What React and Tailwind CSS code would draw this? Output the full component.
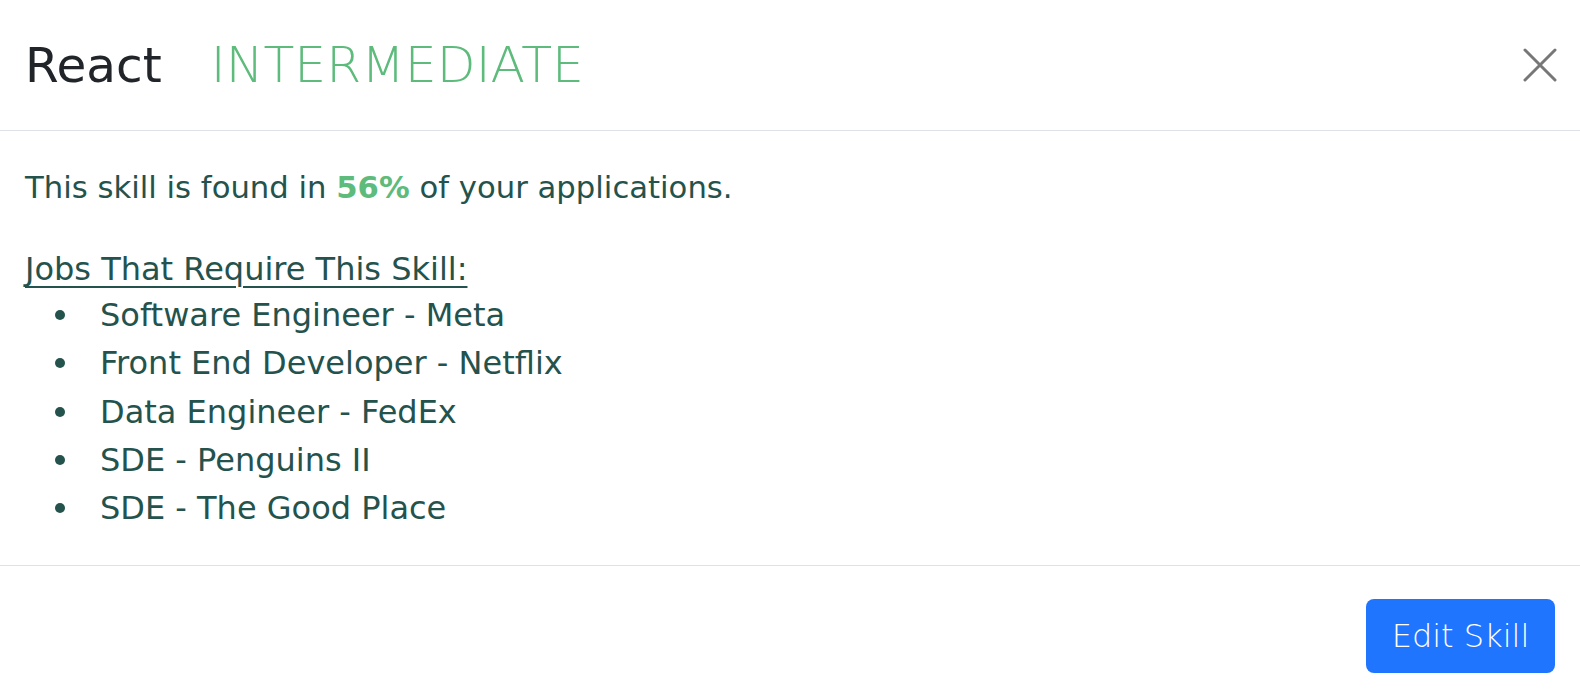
const jobs = [
  "Software Engineer - Meta",
  "Front End Developer - Netflix",
  "Data Engineer - FedEx",
  "SDE - Penguins II",
  "SDE - The Good Place",
];

export default function App() {
  return (
    <div className="w-[1580px] h-[690px] bg-white flex flex-col font-['DejaVu_Sans',sans-serif] overflow-hidden">
      {/* Header */}
      <div className="h-[131px] shrink-0 flex items-center justify-between pl-[25px] pr-[22px] border-b border-[#dee2e6]">
        <div className="flex items-center gap-[49px]">
          <h1 className="text-[48.5px] leading-none text-[#212529]">React</h1>
          <span className="text-[50.5px] leading-none font-extralight text-[#5dbb7b]">INTERMEDIATE</span>
        </div>
        <button className="w-[36px] h-[36px] flex items-center justify-center text-[#777]" title="Close">
          <svg width="34" height="34" viewBox="0 0 34 34" fill="none" stroke="currentColor" strokeWidth="3" strokeLinecap="round">
            <path d="M2 2 L32 32 M32 2 L2 32" />
          </svg>
        </button>
      </div>

      {/* Body */}
      <div className="px-[25px] pt-[33px] pb-[33px] text-[#24524d] text-[32px] border-b border-[#dee2e6]">
        <p className="leading-[48px] text-[30.7px]">
          This skill is found in <span className="text-[#5dbb7b] font-semibold">56%</span> of your applications.
        </p>
        <h2 className="mt-[33px] leading-[48px] underline underline-offset-[6px] decoration-2">Jobs That Require This Skill:</h2>
        <ul className="-mt-[2px]">
          {jobs.map((job) => (
            <li key={job} className="flex items-center h-[48.3px]">
              <span className="w-[75px] pl-[30px]">
                <span className="block w-[10px] h-[10px] rounded-full bg-[#24524d]" />
              </span>
              <span>{job}</span>
            </li>
          ))}
        </ul>
      </div>

      {/* Footer */}
      <div className="flex justify-end pt-[33px] pr-[25px]">
        <button className="w-[189px] h-[74px] rounded-[8px] bg-[#1f75fe] text-white text-[32px] font-light">
          Edit Skill
        </button>
      </div>
    </div>
  );
}
